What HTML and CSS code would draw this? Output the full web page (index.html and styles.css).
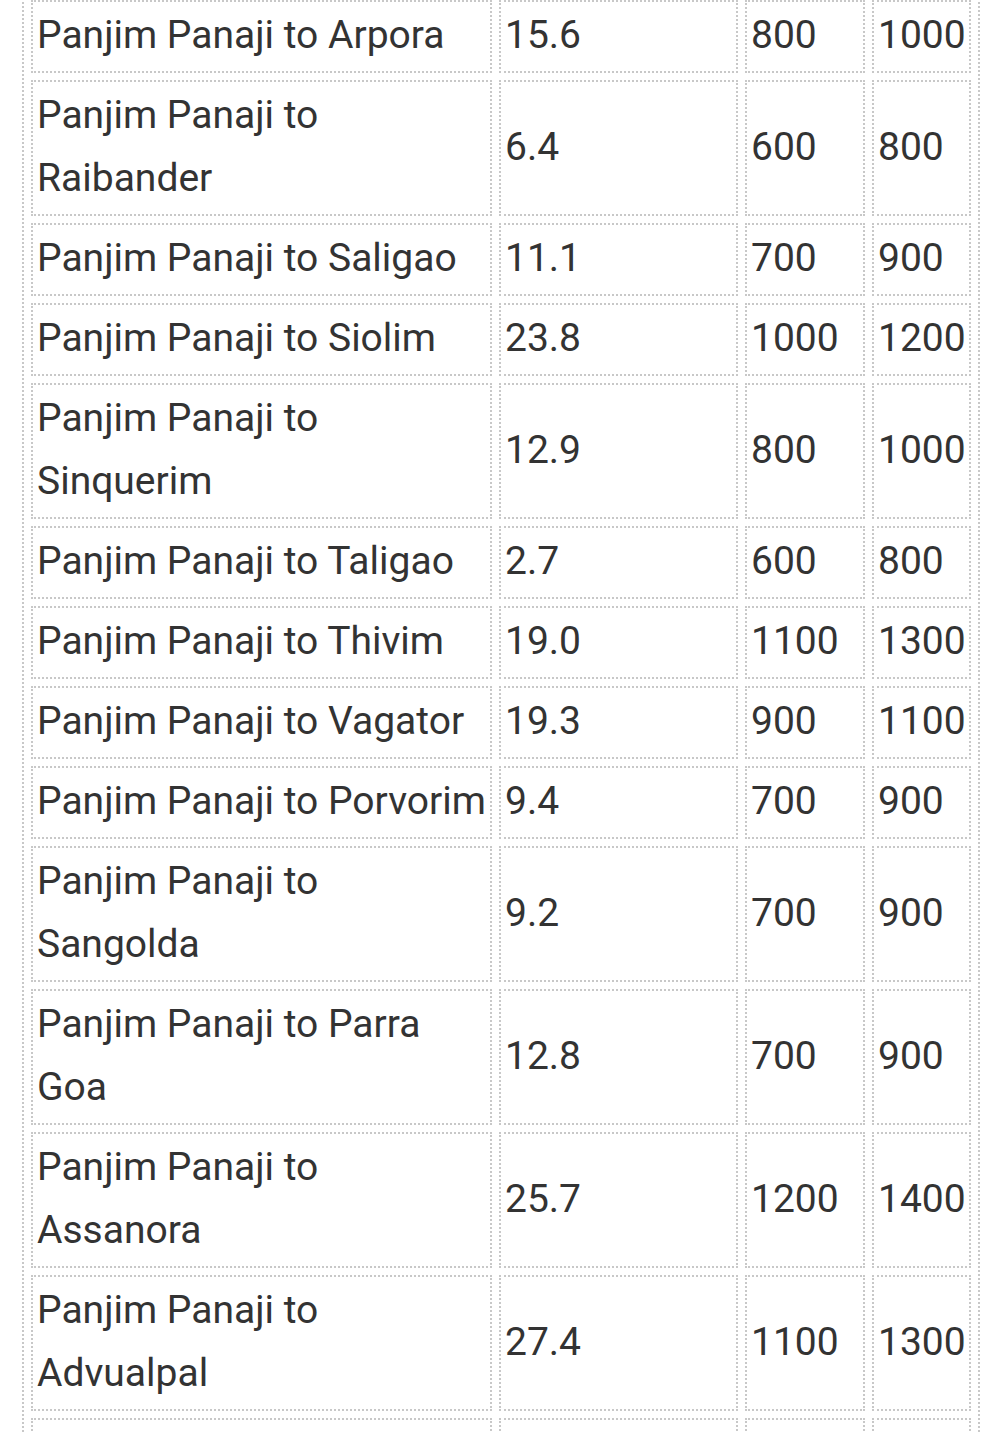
FILE: index.html
```html
<!DOCTYPE html>
<html lang="en">
<head>
    <meta charset="UTF-8">
    <meta name="viewport" content="width=device-width, initial-scale=1.0">
    <title>Panjim Panaji Taxi Fare</title>
    <link rel="stylesheet" href="styles.css">
</head>
<body>
    <div class="container">
        <table class="fare-table">
            <colgroup>
                <col class="col-route">
                <col class="col-km">
                <col class="col-fare">
                <col class="col-fare2">
            </colgroup>
            <tbody>
                <tr><td>Panjim Panaji to Arpora</td><td>15.6</td><td>800</td><td>1000</td></tr>
                <tr><td>Panjim Panaji to Raibander</td><td>6.4</td><td>600</td><td>800</td></tr>
                <tr><td>Panjim Panaji to Saligao</td><td>11.1</td><td>700</td><td>900</td></tr>
                <tr><td>Panjim Panaji to Siolim</td><td>23.8</td><td>1000</td><td>1200</td></tr>
                <tr><td>Panjim Panaji to Sinquerim</td><td>12.9</td><td>800</td><td>1000</td></tr>
                <tr><td>Panjim Panaji to Taligao</td><td>2.7</td><td>600</td><td>800</td></tr>
                <tr><td>Panjim Panaji to Thivim</td><td>19.0</td><td>1100</td><td>1300</td></tr>
                <tr><td>Panjim Panaji to Vagator</td><td>19.3</td><td>900</td><td>1100</td></tr>
                <tr><td>Panjim Panaji to Porvorim</td><td>9.4</td><td>700</td><td>900</td></tr>
                <tr><td>Panjim Panaji to Sangolda</td><td>9.2</td><td>700</td><td>900</td></tr>
                <tr><td>Panjim Panaji to Parra Goa</td><td>12.8</td><td>700</td><td>900</td></tr>
                <tr><td>Panjim Panaji to Assanora</td><td>25.7</td><td>1200</td><td>1400</td></tr>
                <tr><td>Panjim Panaji to Advualpal</td><td>27.4</td><td>1100</td><td>1300</td></tr>
                <tr><td>Panjim Panaji to Aldona</td><td>20.1</td><td>1000</td><td>1200</td></tr>
            </tbody>
        </table>
    </div>
</body>
</html>
```

FILE: styles.css
```css
*{margin: 0; padding: 0; box-sizing: border-box;}

body{
    background-color: #fff;
    font-family: Roboto, "Liberation Sans", sans-serif;
    color: #333;
    overflow: hidden;
}

.container{
    width: 994px;
    height: 1432px;
    padding-left: 22px;
    overflow: hidden;
}

.fare-table{
    width: 958px;
    margin-top: -9px;
    table-layout: fixed;
    border-collapse: separate;
    border-spacing: 7px;
    border: 2px dotted #c8c8c8;
}

.col-route{ width: 461px; }
.col-km{ width: 239px; }
.col-fare{ width: 120px; }
.col-fare2{ width: 99px; }

.fare-table td{
    border: 2px dotted #c8c8c8;
    padding: 2px 4px 4px 4px;
    font-size: 39px;
    line-height: 63px;
    vertical-align: middle;
    text-align: left;
}
```
